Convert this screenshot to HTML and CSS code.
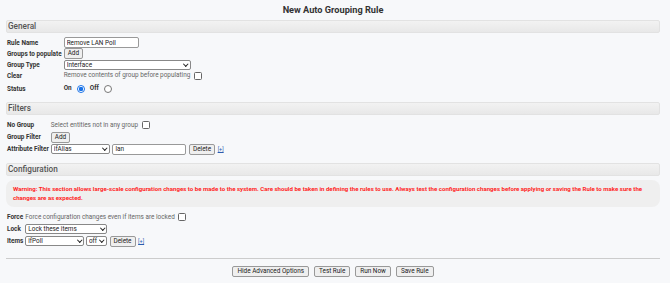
FILE: index.html
```html
<!DOCTYPE html>
<html lang="en">
<head>
    <meta charset="UTF-8">
    <meta name="viewport" content="width=device-width, initial-scale=1.0">
    <title>New Auto Grouping Rule</title>
    <link rel="stylesheet" href="styles.css">
</head>
<body>
    <h1 class="title">New Auto Grouping Rule</h1>

    <!-- general -->
    <div class="section-head">General</div>
    <table class="form general">
        <tr>
            <td class="label">Rule Name</td>
            <td><input type="text" class="text name" value="Remove LAN Poll"></td>
        </tr>
        <tr>
            <td class="label">Groups to populate</td>
            <td><button class="btn">Add</button></td>
        </tr>
        <tr>
            <td class="label">Group Type</td>
            <td><span class="drop type"><select class="sel"><option>Interface</option></select></span></td>
        </tr>
        <tr>
            <td class="label">Clear</td>
            <td class="hint">Remove contents of group before populating <input type="checkbox" class="check"></td>
        </tr>
        <tr class="status-row">
            <td class="label">Status</td>
            <td class="radios">On <input type="radio" name="status" class="radio" checked> Off <input type="radio" name="status" class="radio"></td>
        </tr>
    </table>

    <!-- filters -->
    <div class="section-head">Filters</div>
    <table class="form filters">
        <tr>
            <td class="label">No Group</td>
            <td class="hint">Select entities not in any group <input type="checkbox" class="check"></td>
        </tr>
        <tr>
            <td class="label">Group Filter</td>
            <td><button class="btn">Add</button></td>
        </tr>
        <tr>
            <td class="label">Attribute Filter</td>
            <td class="inline">
                <span class="drop attr"><select class="sel"><option>ifAlias</option></select></span>
                <input type="text" class="text attr-val" value="lan">
                <button class="btn">Delete</button>
                <a href="#" class="more">[+]</a>
            </td>
        </tr>
    </table>

    <!-- configuration -->
    <div class="section-head">Configuration</div>
    <div class="warning">Warning: This section allows large-scale configuration changes to be made to the system. Care should be taken in defining the rules to use. Always test the configuration changes before applying or saving the Rule to make sure the changes are as expected.</div>
    <table class="form config">
        <tr>
            <td class="label">Force</td>
            <td class="hint">Force configuration changes even if items are locked <input type="checkbox" class="check"></td>
        </tr>
        <tr>
            <td class="label">Lock</td>
            <td><span class="drop lock"><select class="sel"><option>Lock these items</option></select></span></td>
        </tr>
        <tr>
            <td class="label">Items</td>
            <td class="inline">
                <span class="drop item"><select class="sel"><option>ifPoll</option></select></span>
                <span class="drop onoff"><select class="sel"><option>off</option></select></span>
                <button class="btn">Delete</button>
                <a href="#" class="more">[+]</a>
            </td>
        </tr>
    </table>

    <hr class="rule">
    <div class="actions">
        <button class="btn">Hide Advanced Options</button>
        <button class="btn">Test Rule</button>
        <button class="btn">Run Now</button>
        <button class="btn">Save Rule</button>
    </div>
</body>
</html>
```

FILE: styles.css
```css
/* page styles */

body {
    font-family: Roboto, 'Liberation Sans', Arial, sans-serif;
    font-size: 6.4px;
    color: #333;
    background-color: #f7f8fa;
    margin: 0;
    padding: 4px 10px 0 6px;
}
h1.title {
    font-size: 9.2px;
    font-weight: bold;
    color: #333;
    text-align: center;
    margin: 0 0 4px 0;
    padding: 0;
    line-height: 12px;
}
.section-head {
    font-size: 8.2px;
    color: #555;
    font-weight: 500;
    height: 11px;
    line-height: 11px;
    padding: 0 0 0 1px;
    background: linear-gradient(#f2f2f2, #e8e8e8);
    border: 1px solid #e2e2e2;
    border-radius: 2px;
}
table.form {
    border-collapse: collapse;
}
table.form td {
    padding: 0;
    height: 12px;
    vertical-align: middle;
    white-space: nowrap;
}
table.general td { height: 11px; }
td.label {
    font-weight: bold;
    color: #333;
    padding: 0 2px 0 1px !important;
}
table.general { margin: 4px 0 7px 0; }
table.filters { margin: 4px 0 8px 0; }
table.config { margin: 4px 0 0 0; }
table.general tr.status-row td { height: 13px; padding-top: 1px !important; }
td.hint { color: #666; }
td.radios { font-weight: bold; color: #333; }
.text, .sel, .btn {
    font-family: inherit;
    font-size: 6.4px;
    color: #222;
    margin: 0;
    box-sizing: border-box;
    vertical-align: middle;
}
.text {
    height: 11px;
    border: 1px solid #999;
    border-radius: 2px;
    background: #fff;
    padding: 0 2px;
}
/* select with a drawn chevron */
.drop {
    position: relative;
    display: inline-block;
    vertical-align: middle;
    height: 10px;
}
.drop .sel {
    appearance: none;
    -webkit-appearance: none;
    width: 100%;
    height: 10px;
    border: 1px solid #888;
    border-radius: 2px;
    background: #fff;
    padding: 0 6px 0 2px;
    line-height: 8px;
    display: block;
}
.drop::after {
    content: "";
    position: absolute;
    right: 3px;
    top: 2px;
    width: 2.5px;
    height: 2.5px;
    border-right: 1.3px solid #222;
    border-bottom: 1.3px solid #222;
    transform: rotate(45deg);
    pointer-events: none;
}
.btn {
    height: 11px;
    padding: 0 3px;
    border: 1px solid #999;
    border-radius: 2px;
    background: #efefef;
    line-height: 9px;
}
.name { width: 75px; }
.type { width: 127px; }
.attr { width: 59px; }
.attr-val { width: 74px; margin-left: 1px; }
.lock { width: 82px; }
.item { width: 59px; }
.onoff { width: 21px; }
.check {
    appearance: none;
    -webkit-appearance: none;
    width: 8px;
    height: 8px;
    margin: 0 0 0 2px;
    vertical-align: middle;
    border: 1px solid #666;
    border-radius: 1.5px;
    background: #fff;
    box-sizing: border-box;
}
.radio {
    appearance: none;
    -webkit-appearance: none;
    width: 8px;
    height: 8px;
    margin: 0 3px 0 4px;
    vertical-align: middle;
    border: 1px solid #777;
    border-radius: 50%;
    background: #fff;
    box-sizing: border-box;
}
.radio:checked {
    border-color: #1a73e8;
    background: radial-gradient(circle, #1a73e8 0, #1a73e8 2px, #fff 2.4px);
}
td.inline .btn { margin-left: 1px; }
a.more {
    color: #2a5db0;
    font-size: 5.5px;
    margin-left: 1px;
}
.warning {
    margin: 4px 0 0 0;
    padding: 4px 4px 5px 7px;
    background-color: #efefef;
    border-radius: 8px;
    color: #ff2424;
    font-weight: bold;
    font-size: 6.1px;
    line-height: 9px;
}
hr.rule {
    border: 0;
    border-top: 1px solid #ccc;
    margin: 11px 0 0 0;
}
.actions {
    display: flex;
    justify-content: center;
    gap: 5px;
    padding: 7px 0 0 0;
}
.actions .btn { height: 11px; padding: 0 4px; }
```
